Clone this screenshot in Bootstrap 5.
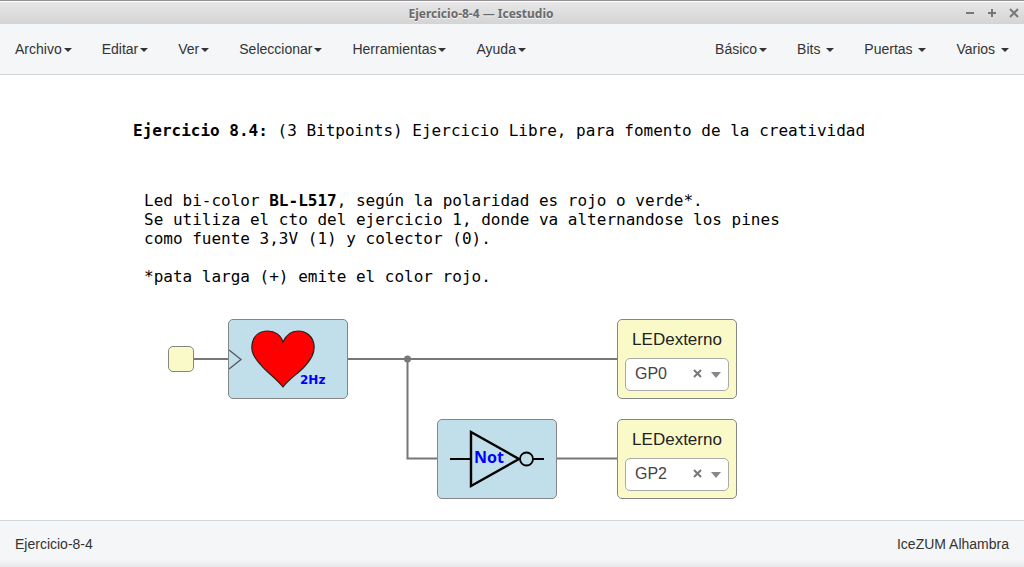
<!DOCTYPE html>
<html lang="es">
<head>
<meta charset="utf-8">
<meta name="viewport" content="width=device-width, initial-scale=1">
<title>Ejercicio-8-4 — Icestudio</title>
<link href="https://cdn.jsdelivr.net/npm/bootstrap@5.3.0/dist/css/bootstrap.min.css" rel="stylesheet">
<style>
  body { font-family: "Liberation Sans", Arial, sans-serif; font-size: 14px; line-height: 20px; color: #333; background: #fff; }
  .titlebar { height: 24px; padding-right: 62px; border-top: 1px solid #959096; box-shadow: inset 0 1px #fff; background: linear-gradient(#e8e8e8, #d4d4d4); }
  .titlebar h1 { font: bold 12px/25px "Noto Sans", sans-serif; color: #6a6a6a; text-shadow: 0 1px #f4f4f4; }
  .window-controls { right: 4px; gap: 10px; }
  .window-controls svg, .clear-btn svg { display: block; }
  .bar { background: #f5f6f8; }
  .menubar { border-bottom: 1px solid #d3d4d6; }
  .menubar .nav-link { color: #333; padding: 15px; line-height: 20px; }
  .menubar .dropdown-toggle::after { border-width: 4px 4px 0; margin-left: 2px; vertical-align: 2px; }
  .statusbar { border-top: 1px solid #d3d4d6; padding: 13px 15px; background: linear-gradient(#f5f6f8 85%, #e6e8ea); }
  .note { font: 16px/19px "DejaVu Sans Mono", monospace; color: #000; }
  .canvas { padding: 46px 0 20px 133px; }
  .note-body { margin: 51px 0 33px 11px; }
  .note-body p { margin: 0; }
  .note-body p + .footnote { margin-top: 19px; }
  .board { height: 180px; margin-left: 35px; }
  .node { position: absolute; width: 120px; height: 80px; border: 1px solid #858585; border-radius: 5px; }
  .node-code { background: #c0dfeb; }
  .node-pin { background: #fafac8; padding: 10px 7px 0; }
  .node-pin label { display: block; font-size: 17px; line-height: 20px; text-align: center; color: #222; margin-bottom: 8px; }
  .node-clock { left: 60px; top: 0; }
  .node-not { left: 269px; top: 100px; }
  .node-led0 { left: 449px; top: 0; }
  .node-led2 { left: 449px; top: 100px; }
  .node-input { left: 0; top: 27px; width: 26px; height: 26px; background: #fafac8; }
  .pin-select { appearance: none; width: 104px; height: 33px; border: 1px solid #aaa; border-radius: 5px; background: #fff; color: #444; font-size: 16px; padding: 0 0 2px 9px; }
  .clear-btn { position: absolute; right: 27px; top: 11px; }
  .pin-arrow { position: absolute; right: 8px; top: 14px; pointer-events: none; }
</style>
</head>
<body class="d-flex flex-column min-vh-100">
<header>
  <div class="titlebar position-relative text-center">
    <h1 class="m-0">Ejercicio-8-4 — Icestudio</h1>
    <div class="window-controls position-absolute top-0 d-flex pt-1">
      <button class="btn p-0 border-0" aria-label="Minimizar"><svg width="12" height="16" fill="none" stroke="#777" stroke-width="2"><path d="M2 8h8"/></svg></button>
      <button class="btn p-0 border-0" aria-label="Maximizar"><svg width="12" height="16" fill="none" stroke="#777" stroke-width="2"><path d="M2 8h8M6 4v8"/></svg></button>
      <button class="btn p-0 border-0" aria-label="Cerrar"><svg width="12" height="16" fill="none" stroke="#777" stroke-width="2"><path d="M2 4l8 8M10 4l-8 8"/></svg></button>
    </div>
  </div>
  <nav class="bar menubar d-flex justify-content-between">
    <div class="nav">
      <a class="nav-link dropdown-toggle" data-bs-toggle="dropdown" href="#">Archivo</a>
      <a class="nav-link dropdown-toggle" data-bs-toggle="dropdown" href="#">Editar</a>
      <a class="nav-link dropdown-toggle" data-bs-toggle="dropdown" href="#">Ver</a>
      <a class="nav-link dropdown-toggle" data-bs-toggle="dropdown" href="#">Seleccionar</a>
      <a class="nav-link dropdown-toggle" data-bs-toggle="dropdown" href="#">Herramientas</a>
      <a class="nav-link dropdown-toggle" data-bs-toggle="dropdown" href="#">Ayuda</a>
    </div>
    <div class="nav">
      <a class="nav-link dropdown-toggle" data-bs-toggle="dropdown" href="#">Básico</a>
      <a class="nav-link dropdown-toggle" data-bs-toggle="dropdown" href="#">Bits </a>
      <a class="nav-link dropdown-toggle" data-bs-toggle="dropdown" href="#">Puertas </a>
      <a class="nav-link dropdown-toggle" data-bs-toggle="dropdown" href="#">Varios </a>
    </div>
  </nav>
</header>

<main class="canvas flex-grow-1">
  <p class="note m-0"><b>Ejercicio 8.4:</b> (3 Bitpoints) Ejercicio Libre, para fomento de la creatividad</p>
  <div class="note note-body">
    <p>Led bi-color <b>BL-L517</b>, según la polaridad es rojo o verde*.</p>
    <p>Se utiliza el cto del ejercicio 1, donde va alternandose los pines</p>
    <p>como fuente 3,3V (1) y colector (0).</p>
    <p class="footnote">*pata larga (+) emite el color rojo.</p>
  </div>

  <div class="board position-relative">
    <svg class="d-block" width="570" height="180" fill="none" stroke="#777" stroke-width="2" aria-hidden="true">
      <path d="M26 40H60M180 40H449M239.500 40V139.500H269M389 139.500H449"/>
      <circle cx="239.500" cy="40" r="3.500" fill="#777" stroke="none"/>
    </svg>
    <div class="node node-input"></div>
    <div class="node node-code node-clock">
      <svg class="d-block" width="118" height="78" role="img" aria-label="Corazón de 2 Hz">
        <path d="M0 30L12 39.500L0 49" fill="none" stroke="#555" stroke-width="1.300"/>
        <path d="M54 67C46 57 37 52 31 44C25 37 22 32 23 25C24 16 30 11 39 11C46 11 52 15 54 22C57 15 62 11 69 11C78 11 84 17 85 25C86 33 82 39 76 46C70 53 61 58 54 67Z" fill="#f00" stroke="#222" stroke-width="1.200"/>
        <text x="71" y="64" font-family="DejaVu Sans, sans-serif" font-size="12" font-weight="bold" fill="#00f">2Hz</text>
      </svg>
    </div>
    <div class="node node-code node-not">
      <svg class="d-block" width="118" height="78" fill="none" stroke="#000" role="img" aria-label="Puerta Not">
        <path d="M12 39H33M94 39H106" stroke-width="1.800"/>
        <path d="M33 12V66L81 39Z" stroke-width="2.400"/>
        <circle cx="88.500" cy="39" r="6.500" stroke-width="1.800"/>
        <text x="36" y="43" font-family="Noto Sans, sans-serif" font-size="16" font-weight="bold" fill="#00f" stroke="none">Not</text>
      </svg>
    </div>
    <div class="node node-pin node-led0">
      <label for="pin0">LEDexterno</label>
      <div class="position-relative">
        <select id="pin0" class="pin-select"><option>GP0</option></select>
        <button class="clear-btn btn p-0 border-0" aria-label="Quitar GP0"><svg width="9" height="9" stroke="#777" stroke-width="2"><path d="M1 1l7 7M8 1l-7 7"/></svg></button>
        <svg class="pin-arrow" width="10" height="6" fill="#888"><path d="M0 0h10l-5 6z"/></svg>
      </div>
    </div>
    <div class="node node-pin node-led2">
      <label for="pin2">LEDexterno</label>
      <div class="position-relative">
        <select id="pin2" class="pin-select"><option>GP2</option></select>
        <button class="clear-btn btn p-0 border-0" aria-label="Quitar GP2"><svg width="9" height="9" stroke="#777" stroke-width="2"><path d="M1 1l7 7M8 1l-7 7"/></svg></button>
        <svg class="pin-arrow" width="10" height="6" fill="#888"><path d="M0 0h10l-5 6z"/></svg>
      </div>
    </div>
  </div>
</main>

<footer class="statusbar d-flex justify-content-between">
  <span>Ejercicio-8-4</span>
  <span>IceZUM Alhambra</span>
</footer>
<script src="https://cdn.jsdelivr.net/npm/bootstrap@5.3.0/dist/js/bootstrap.bundle.min.js"></script>
</body>
</html>
